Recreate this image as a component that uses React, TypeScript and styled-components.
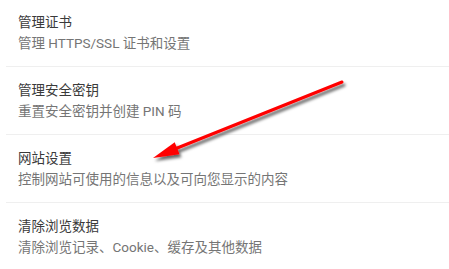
import styled, { createGlobalStyle } from "styled-components";

const GlobalStyle = createGlobalStyle`
  html, body {
    margin: 0;
    padding: 0;
    background: #fff;
  }
  body {
    font-family: Roboto, "Noto Sans CJK SC", sans-serif;
  }
`;

const Page = styled.div`
  position: relative;
  width: 449px;
  height: 269px;
  overflow: hidden;
  background: #fff;
`;

const List = styled.ul`
  list-style: none;
  margin: 0;
  padding: 0;
`;

const Item = styled.li`
  margin-left: 6px;
  padding: 13px 0 13px 12px;
  border-top: 1px solid #efefef;
  font-size: 13.5px;
  line-height: 20.5px;

  &:first-child {
    border-top: none;
    padding-top: 12px;
  }
`;

const Title = styled.div`
  color: #3a3a3a;
`;

const Sub = styled.div`
  color: #757575;
`;

const Arrow = styled.svg`
  position: absolute;
  left: 0;
  top: 0;
  pointer-events: none;
`;

const items = [
  { title: "管理证书", sub: "管理 HTTPS/SSL 证书和设置" },
  { title: "管理安全密钥", sub: "重置安全密钥并创建 PIN 码" },
  { title: "网站设置", sub: "控制网站可使用的信息以及可向您显示的内容" },
  { title: "清除浏览数据", sub: "清除浏览记录、Cookie、缓存及其他数据" },
];

export default function App() {
  return (
    <Page>
      <GlobalStyle />
      <List>
        {items.map((it) => (
          <Item key={it.title}>
            <Title>{it.title}</Title>
            <Sub>{it.sub}</Sub>
          </Item>
        ))}
      </List>
      <Arrow width="449" height="269" viewBox="0 0 449 269">
        <defs>
          <filter id="sh" x="-10%" y="-30%" width="130%" height="180%">
            <feDropShadow dx="2" dy="3" stdDeviation="1.8" floodColor="#000" floodOpacity="0.6" />
          </filter>
        </defs>
        <g filter="url(#sh)">
          <line x1="342" y1="82" x2="176" y2="148.5" stroke="#ff0000" strokeWidth="3" strokeLinecap="round" />
          <polygon points="153,158 174.7,142.3 179.5,154.3" fill="#ff0000" />
        </g>
      </Arrow>
    </Page>
  );
}
